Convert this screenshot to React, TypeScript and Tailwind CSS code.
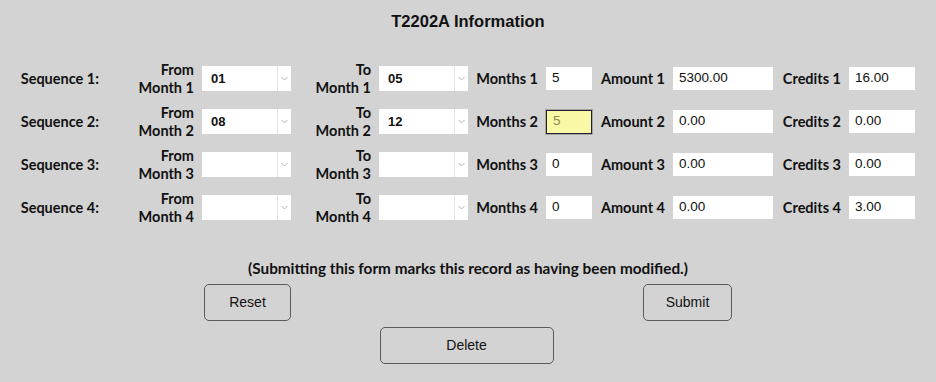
const rows = [
  { n: 1, from: "01", to: "05", months: "5", amount: "5300.00", credits: "16.00" },
  { n: 2, from: "08", to: "12", months: "5", amount: "0.00", credits: "0.00", hi: true },
  { n: 3, from: "", to: "", months: "0", amount: "0.00", credits: "0.00" },
  { n: 4, from: "", to: "", months: "0", amount: "0.00", credits: "3.00" },
];

const Select = ({ value }: { value: string }) => (
  <div className="ml-[8px] flex h-[25px] w-[89px] bg-white">
    <div className="flex flex-1 items-center pl-[9px] font-['Liberation_Sans',Arial,sans-serif] text-[13px] font-bold text-[#111]">
      {value}
    </div>
    <div className="flex w-[14px] items-center justify-center border-l border-[#e4e4e4]">
      <svg width="7" height="5" viewBox="0 0 7 5">
        <polyline points="0.5,1 3.5,4 6.5,1" fill="none" stroke="#b4b4b4" strokeWidth="1" />
      </svg>
    </div>
  </div>
);

const Input = ({ value, w, hi }: { value: string; w: string; hi?: boolean }) => (
  <div
    className={`ml-[8px] flex items-center pl-[6px] font-['Liberation_Sans',Arial,sans-serif] text-[13.5px] font-normal ${w} ${
      hi
        ? "h-[24px] border border-[#22222e] bg-[#f8f8a6] text-[#8a8a52] outline outline-1 outline-[#a4a4a4]"
        : "h-[23px] bg-white text-[#111]"
    }`}
  >
    {value}
  </div>
);

export default function App() {
  return (
    <div className="h-[382px] w-[936px] bg-[#d3d3d3] font-['Lato',sans-serif] text-[#111]">
      <div className="flex h-[42px] items-center justify-center font-['Liberation_Sans',Arial,sans-serif] text-[16.5px] font-bold">
        T2202A Information
      </div>

      <div className="mt-[15px] flex flex-col">
        {rows.map((r) => (
          <div key={r.n} className="flex h-[43px] items-center text-[14.5px] font-bold">
            <div className="w-[99px] text-right">Sequence {r.n}:</div>
            <div className="w-[95px] text-right leading-[18px]">
              From
              <br />
              Month {r.n}
            </div>
            <Select value={r.from} />
            <div className="w-[80px] text-right leading-[18px]">
              To
              <br />
              Month {r.n}
            </div>
            <Select value={r.to} />
            <div className="w-[70px] text-right">Months {r.n}</div>
            <Input value={r.months} w="w-[46px]" hi={r.hi} />
            <div className="w-[73px] text-right">Amount {r.n}</div>
            <Input value={r.amount} w="w-[100px]" />
            <div className="w-[68px] text-right">Credits {r.n}</div>
            <Input value={r.credits} w="w-[66px]" />
          </div>
        ))}
      </div>

      <div className="mt-[29px] text-center text-[15.3px] font-bold leading-[20px]">
        (Submitting this form marks this record as having been modified.)
      </div>

      <div className="mx-auto mt-[6px] flex w-[528px] justify-between font-['Liberation_Sans',Arial,sans-serif] text-[14px] text-[#111]">
        <button className="h-[37px] w-[87px] rounded-[5px] border border-[#5c5c5c]">Reset</button>
        <button className="h-[37px] w-[89px] rounded-[5px] border border-[#5c5c5c]">Submit</button>
      </div>
      <div className="mt-[6px] flex justify-center font-['Liberation_Sans',Arial,sans-serif] text-[14px] text-[#111]">
        <button className="ml-[-3px] h-[37px] w-[174px] rounded-[5px] border border-[#5c5c5c]">Delete</button>
      </div>
    </div>
  );
}
